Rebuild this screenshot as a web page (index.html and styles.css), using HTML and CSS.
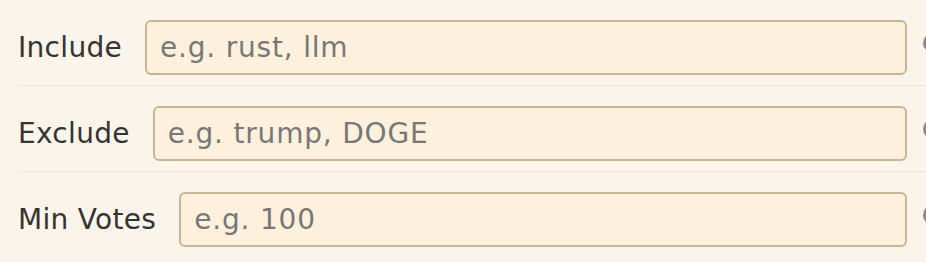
FILE: index.html
```html
<!DOCTYPE html>
<html lang="en">
<head>
  <meta charset="UTF-8" />
  <meta name="viewport" content="width=device-width, initial-scale=1.0"/>
  <title>Filters</title>
  <link rel="stylesheet" href="styles.css">
</head>
<body>

  <!-- Filter rows -->
  <div class="filters">
    <div class="filter-row">
      <label for="include">Include</label>
      <input id="include" type="text" placeholder="e.g. rust, llm" />
      <span class="row-extra"></span>
    </div>

    <div class="filter-row">
      <label for="exclude">Exclude</label>
      <input id="exclude" type="text" placeholder="e.g. trump, DOGE" />
      <span class="row-extra"></span>
    </div>

    <div class="filter-row">
      <label for="minVotes">Min Votes</label>
      <input id="minVotes" type="text" placeholder="e.g. 100" />
      <span class="row-extra"></span>
    </div>
  </div>

</body>
</html>
```

FILE: styles.css
```css
:root {
  --page-bg: #faf4ea;
  --input-bg: #fdf1dd;
  --input-border: #c6b492;
  --line: #ebe8e3;
  --text: #333;
  --muted: #777;
}

* {
  box-sizing: border-box;
}

body, html {
  margin: 0;
  padding: 0;
  height: 100%;
  overflow: hidden;
  background-color: var(--page-bg);
  font-family: 'DejaVu Sans', Verdana, sans-serif;
  color: var(--text);
}

.filters {
  width: 926px;
  margin-left: 17px;
  padding-top: 10px;
}

.filter-row {
  display: flex;
  align-items: center;
  padding: 10px 0;
  margin-bottom: 10px;
  border-bottom: 1px solid var(--line);
}

.filter-row:last-child {
  border-bottom: none;
}

.filter-row label {
  font-size: 28px;
  letter-spacing: 0.3px;
  margin-left: 1px;
  margin-right: 23px;
  white-space: nowrap;
}

.filter-row input {
  flex: 1;
  height: 55px;
  padding: 0 13px;
  font-family: inherit;
  font-size: 28px;
  letter-spacing: 0.8px;
  color: var(--text);
  background-color: var(--input-bg);
  border: 2px solid var(--input-border);
  border-radius: 6px;
  outline: none;
}

.filter-row input::placeholder {
  color: var(--muted);
}

.row-extra {
  flex: 0 0 20px;
  height: 20px;
  margin-left: 16px;
  margin-bottom: 9px;
  border: 3px solid #888;
  border-radius: 50%;
}
```
